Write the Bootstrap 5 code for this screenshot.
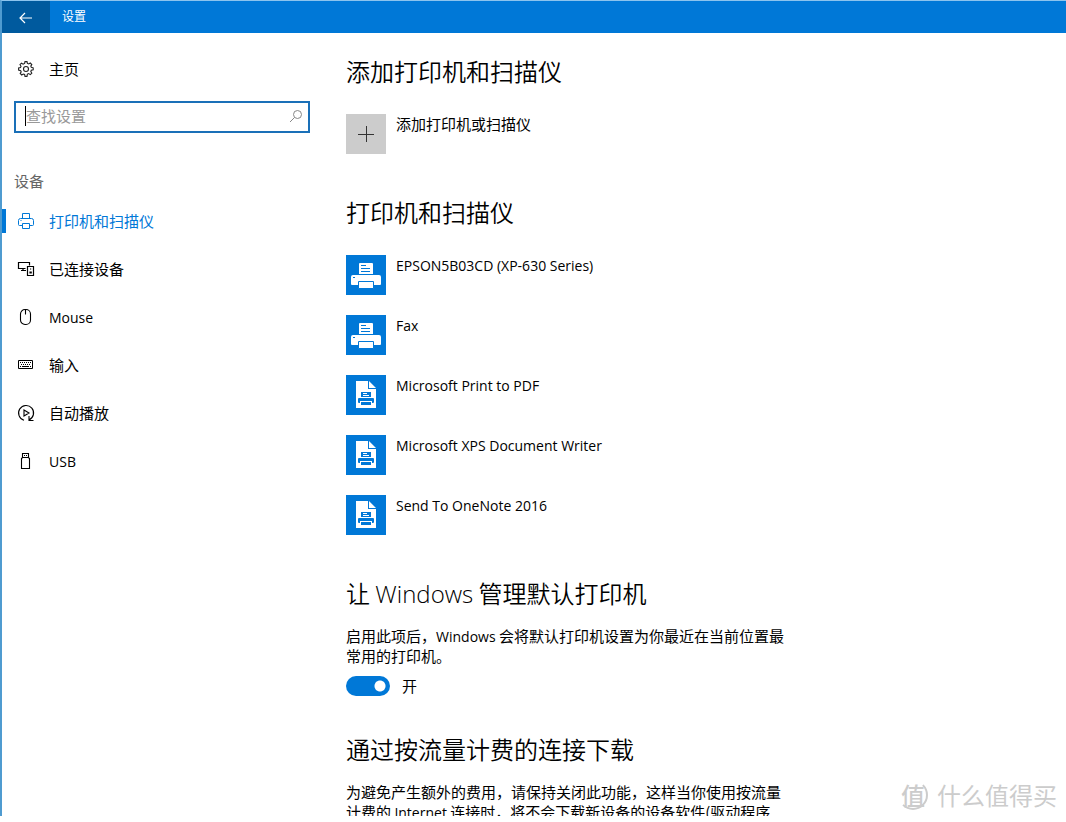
<!DOCTYPE html>
<html lang="zh-CN">
<head>
<meta charset="utf-8">
<meta name="viewport" content="width=device-width, initial-scale=1">
<title>设置</title>
<link href="https://cdn.jsdelivr.net/npm/bootstrap@5.3.0/dist/css/bootstrap.min.css" rel="stylesheet">
<style>
:root { --accent: #0078d7; --accent-dark: #005a9e; }
body { font-family: "Noto Sans CJK SC", sans-serif; font-size: 15px; line-height: 20px; color: #000; background: #fff; }
.app-window { height: calc(100vh - 6px); overflow: hidden; border-left: 2px solid #4f9bd0; border-top: 1px solid #8cc4ee; }
.title-bar { height: 32px; flex: none; background: var(--accent); color: #fff; font-size: 12px; }
.title-bar > * { padding-bottom: 2px; }
.back-btn { width: 48px; background: var(--accent-dark); border: 0; color: #fff; }
.latin { font-family: "Open Sans", sans-serif; font-size: 14px; }
.side-pane { width: 320px; flex: none; padding-top: 12px; }
.side-link { height: 48px; padding-left: 16px; gap: 15px; color: #000; text-decoration: none; position: relative; }
.side-link .latin { line-height: 22px; padding-top: 2px; }
.side-link svg { width: 16px; height: 16px; flex: none; overflow: visible; }
.side-link.active { color: var(--accent); }
.side-link.active::before { content: ""; position: absolute; left: 0; top: 12px; width: 4px; height: 24px; background: var(--accent); }
.search-box { height: 32px; margin: 8px 12px 0; padding: 0 5px 2px 9px; border: 2px solid #1a70b8; }
.search-box input { border: 0; outline: 0; padding: 0; min-width: 0; }
.search-box input::placeholder { color: #999; opacity: 1; }
.text-caret { width: 1px; height: 20px; background: #000; }
.group-title { color: #666; margin: 38px 12px 6px; }
.content-pane { padding: 20px 24px 0; min-width: 0; }
.content-pane h2 { font-size: 24px; line-height: 36px; font-weight: 350; margin: 0; }
.content-pane h2 .latin { font-size: 24px; line-height: 24px; font-weight: 300; }
.section-list { margin: 25px 0 40px; gap: 20px; }
.device-row { gap: 10px; border: 0; padding: 0; background: none; text-align: left; color: #000; }
.device-row .latin { line-height: 22px; }
.device-row svg { width: 40px; height: 40px; flex: none; }
.desc { max-width: 446px; margin: 15px 0 10px; }
.desc .latin { line-height: 14px; }
.toggle-row { gap: 12px; margin-bottom: 35px; }
.form-switch .toggle-input.form-check-input { width: 44px; height: 20px; margin: 0; border: 0; background: radial-gradient(circle at 34px 10px, #fff 5px, var(--accent) 6px); }
.watermark { position: absolute; right: 9px; bottom: 5px; gap: 9px; color: #ccc; font-size: 24px; line-height: 32px; }
.watermark-seal { width: 30px; height: 30px; line-height: 28px; border-radius: 50%; border: 2px solid transparent; border-right-color: #ccc; border-bottom-color: #ccc; display: flex; align-items: center; justify-content: center; font-weight: 500; }
</style>
</head>
<body>
<svg class="d-none" aria-hidden="true">
<symbol id="printer" viewBox="0 0 40 40">
<path fill="#0078d7" d="M0 0h40v40H0z"/>
<path fill="#fff" d="M13 9q0-1 1-1h12q1 0 1 1v10H13zM5 22q0-2 2-2h26q2 0 2 2v7q0 1-1 1H6q-1 0-1-1z"/>
<path fill="#fff" stroke="#0078d7" d="M12.500 26.500h15v7h-15z"/>
<path fill="#0078d7" d="M12 19h16v1H12z"/>
<path stroke="#0078d7" d="M15 10.500h5M15 13.500h9M15 16.500h9M7 22.500h2" fill="none"/>
</symbol>
<symbol id="doc-printer" viewBox="0 0 40 40">
<path fill="#0078d7" d="M0 0h40v40H0z"/>
<path fill="#fff" d="M10 6h12v8h8v19H10zM23 6l7 7h-7z"/>
<path fill="#0078d7" d="M15 17h10v5H15zM12 24q0-1 1-1h14q1 0 1 1v3q0 1-1 1h-1v-2H14v2h-1q-1 0-1-1zM15 27h10v3H15z"/>
<path stroke="#fff" d="M17 18.500h4M17 20.500h6"/>
</symbol>
</svg>
<div class="app-window d-flex flex-column position-relative">
<header class="title-bar d-flex align-items-stretch">
<button class="back-btn" type="button" aria-label="返回"><svg width="14" height="12" fill="none" stroke="currentColor" stroke-width="1.200"><path d="M13 6H1M6 1L1 6l5 5"/></svg></button>
<span class="ms-2 px-1 align-self-center">设置</span>
</header>
<div class="d-flex">
<nav class="side-pane">
<a class="side-link d-flex align-items-center" href="#"><svg viewBox="0 0 16 16" fill="none" stroke="#222" stroke-width="1.100"><path d="M6.600 2.400 7 .6h2l.4 1.800 1.300.6 1.600-1 1.500 1.500-1 1.600.5 1.200 1.900.5v2l-1.900.4-.5 1.300 1 1.600-1.500 1.500-1.600-1-1.300.5L9 15.400H7l-.4-1.900-1.300-.5-1.600 1-1.500-1.500 1-1.600-.5-1.300L.6 9V7l1.900-.4.5-1.300-1-1.600 1.500-1.500 1.600 1z"/><circle cx="8" cy="8" r="2.500"/></svg><span>主页</span></a>
<label class="search-box d-flex align-items-center"><span class="text-caret"></span><input class="flex-grow-1" type="text" placeholder="查找设置" aria-label="查找设置"><svg width="14" height="14" fill="none" stroke="#888"><circle cx="8.500" cy="5.500" r="4"/><path d="M5.500 8.500 1 13"/></svg></label>
<div class="group-title">设备</div>
<a class="side-link active d-flex align-items-center" href="#"><svg viewBox="0 0 16 16" fill="none" stroke="currentColor"><path d="M4.500 5.500v-5h7v5M4.500 12.500h-3q-1 0-1-1v-4q0-2 2-2h11q2 0 2 2v4q0 1-1 1h-3M4.500 10.500h7v5h-7zM2.500 7.500h1"/></svg><span>打印机和扫描仪</span></a>
<a class="side-link d-flex align-items-center" href="#"><svg viewBox="0 0 16 16" fill="none" stroke="currentColor" stroke-width="1.200"><path d="M7.500 7.500h-7v-6h11v3M5 7.500v2M3 9.500h5M9.500 5.500h6v9h-6zM12 8h1.200M12 11h1.200v1H12z"/></svg><span>已连接设备</span></a>
<a class="side-link d-flex align-items-center" href="#"><svg viewBox="0 0 16 16" fill="none" stroke="currentColor" stroke-width="1.100"><rect x="2.500" y=".5" width="10" height="15" rx="4.500"/><path d="M7.500.5v5"/></svg><span class="latin">Mouse</span></a>
<a class="side-link d-flex align-items-center" href="#"><svg viewBox="0 0 16 16" fill="none" stroke="currentColor"><path d="M.5 3.500h14v8H.5z"/><path stroke-dasharray="1 1" d="M2 5.500h12M3 7.500h10"/><path d="M2 9.500h1M4 9.500h7M12 9.500h1"/></svg><span>输入</span></a>
<a class="side-link d-flex align-items-center" href="#"><svg viewBox="0 0 16 16" fill="none" stroke="currentColor" stroke-width="1.100"><path d="M6 15.200A7.500 7.500 0 1 1 11 14.900M11 11v4.500h4.500M6 5l5 3-5 3z"/></svg><span>自动播放</span></a>
<a class="side-link d-flex align-items-center" href="#"><svg viewBox="0 0 16 16" fill="none" stroke="currentColor" stroke-width="1.100"><path d="M4.500 4.500v-4h6v4M3.500 15.500v-10l1-1h6l1 1v10zM6 2.500h1M8 2.500h1"/></svg><span class="latin">USB</span></a>
</nav>
<main class="content-pane flex-grow-1">
<h2>添加打印机和扫描仪</h2>
<div class="section-list d-flex flex-column">
<button class="device-row d-flex" type="button"><svg viewBox="0 0 40 40"><path fill="#ccc" d="M0 0h40v40H0z"/><path stroke="#333" d="M12 20.500h16M20.500 12v16"/></svg><span>添加打印机或扫描仪</span></button>
</div>
<h2>打印机和扫描仪</h2>
<div class="section-list d-flex flex-column">
<button class="device-row d-flex" type="button"><svg><use href="#printer"/></svg><span class="latin">EPSON5B03CD (XP-630 Series)</span></button>
<button class="device-row d-flex" type="button"><svg><use href="#printer"/></svg><span class="latin">Fax</span></button>
<button class="device-row d-flex" type="button"><svg><use href="#doc-printer"/></svg><span class="latin">Microsoft Print to PDF</span></button>
<button class="device-row d-flex" type="button"><svg><use href="#doc-printer"/></svg><span class="latin">Microsoft XPS Document Writer</span></button>
<button class="device-row d-flex" type="button"><svg><use href="#doc-printer"/></svg><span class="latin">Send To OneNote 2016</span></button>
</div>
<h2>让 <span class="latin">Windows</span> 管理默认打印机</h2>
<p class="desc">启用此项后，<span class="latin">Windows</span> 会将默认打印机设置为你最近在当前位置最常用的打印机。</p>
<div class="toggle-row form-switch d-flex align-items-center p-0"><input class="toggle-input form-check-input" type="checkbox" role="switch" id="default-printer" checked><label for="default-printer">开</label></div>
<h2>通过按流量计费的连接下载</h2>
<p class="desc">为避免产生额外的费用，请保持关闭此功能，这样当你使用按流量计费的 <span class="latin">Internet</span> 连接时，将不会下载新设备的设备软件(驱动程序</p>
</main>
</div>
<div class="watermark d-flex align-items-center"><span class="watermark-seal">值</span><span>什么值得买</span></div>
</div>
<script src="https://cdn.jsdelivr.net/npm/bootstrap@5.3.0/dist/js/bootstrap.bundle.min.js"></script>
</body>
</html>
